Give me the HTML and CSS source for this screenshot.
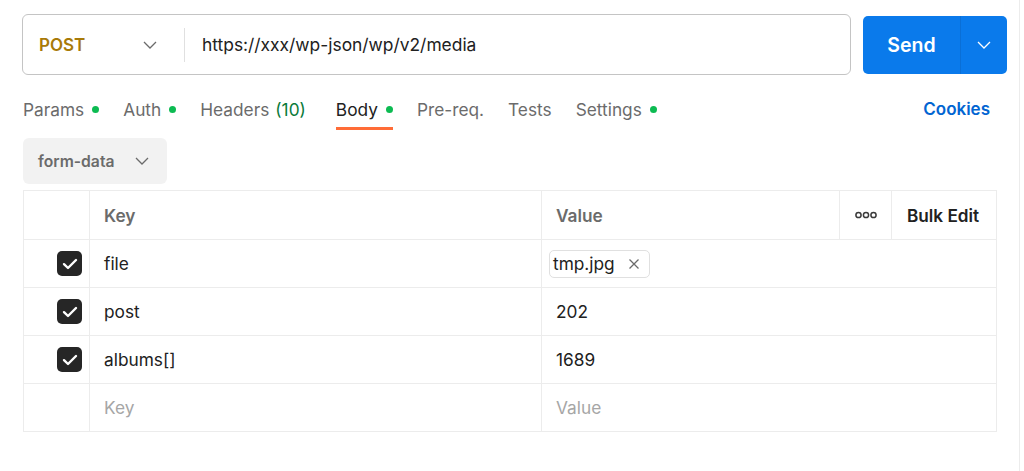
FILE: index.html
```html
<!DOCTYPE html>
<html>
<head>
<meta charset="utf-8">
<link rel="stylesheet" href="styles.css">
</head>
<body>
<div class="page">
  <div class="topbar">
    <div class="urlbar">
      <div class="method">
        <span class="method-name">POST</span>
        <svg class="chev" width="14" height="8" viewBox="0 0 14 8"><path d="M1 1l6 6 6-6" fill="none" stroke="#6b6b6b" stroke-width="1.3"/></svg>
      </div>
      <div class="url">https://xxx/wp-json/wp/v2/media</div>
    </div>
    <div class="send">
      <span class="send-label">Send</span>
      <span class="send-arrow"><svg width="14" height="8" viewBox="0 0 14 8"><path d="M1 1l6 6 6-6" fill="none" stroke="#fff" stroke-width="1.3"/></svg></span>
    </div>
  </div>

  <div class="tabs">
    <div class="tab">Params<span class="dot"></span></div>
    <div class="tab">Auth<span class="dot"></span></div>
    <div class="tab headers">Headers <span class="count">(10)</span></div>
    <div class="tab active">Body<span class="dot"></span></div>
    <div class="tab">Pre-req.</div>
    <div class="tab">Tests</div>
    <div class="tab">Settings<span class="dot"></span></div>
    <div class="spacer"></div>
    <div class="cookies">Cookies</div>
  </div>

  <div class="bodytype">
    <span>form-data</span>
    <svg class="chev" width="14" height="8" viewBox="0 0 14 8"><path d="M1 1l6 6 6-6" fill="none" stroke="#6b6b6b" stroke-width="1.3"/></svg>
  </div>

  <table class="kv">
    <colgroup>
      <col class="c-check"><col class="c-key"><col class="c-val"><col class="c-dots"><col class="c-bulk">
    </colgroup>
    <tr class="head">
      <td></td>
      <td class="th">Key</td>
      <td class="th">Value</td>
      <td class="dots-cell"><svg width="22" height="8" viewBox="0 0 22 8"><circle cx="3.5" cy="4" r="2.6" fill="none" stroke="#3a3a3a" stroke-width="1.5"/><circle cx="11" cy="4" r="2.6" fill="none" stroke="#3a3a3a" stroke-width="1.5"/><circle cx="18.5" cy="4" r="2.6" fill="none" stroke="#3a3a3a" stroke-width="1.5"/></svg></td>
      <td class="bulk">Bulk Edit</td>
    </tr>
    <tr>
      <td class="check"><span class="cb"><svg width="16" height="12" viewBox="0 0 16 12"><path d="M2 6.2l4 3.8 8-8" fill="none" stroke="#fff" stroke-width="2.4" stroke-linecap="round" stroke-linejoin="round"/></svg></span></td>
      <td>file</td>
      <td colspan="3" class="file-cell"><span class="chip">tmp.jpg<svg class="x" width="12" height="12" viewBox="0 0 12 12"><path d="M1.5 1.5l9 9M10.5 1.5l-9 9" stroke="#6b6b6b" stroke-width="1.3"/></svg></span></td>
    </tr>
    <tr>
      <td class="check"><span class="cb"><svg width="16" height="12" viewBox="0 0 16 12"><path d="M2 6.2l4 3.8 8-8" fill="none" stroke="#fff" stroke-width="2.4" stroke-linecap="round" stroke-linejoin="round"/></svg></span></td>
      <td>post</td>
      <td colspan="3">202</td>
    </tr>
    <tr>
      <td class="check"><span class="cb"><svg width="16" height="12" viewBox="0 0 16 12"><path d="M2 6.2l4 3.8 8-8" fill="none" stroke="#fff" stroke-width="2.4" stroke-linecap="round" stroke-linejoin="round"/></svg></span></td>
      <td>albums[]</td>
      <td colspan="3">1689</td>
    </tr>
    <tr>
      <td></td>
      <td class="ph">Key</td>
      <td colspan="3" class="ph">Value</td>
    </tr>
  </table>
</div>
</body>
</html>
```

FILE: styles.css
```css
* { box-sizing: border-box; }
html, body { margin: 0; padding: 0; background: #fff; }
body {
  font-family: Inter, "Noto Sans", "Liberation Sans", sans-serif;
  color: #212121;
  font-size: 17.3px;
}
.page {
  width: 1020px;
  height: 471px;
  border-right: 1px solid #ececec;
  padding: 14px 0 0 23px;
}
.topbar {
  display: flex;
  align-items: center;
  gap: 12px;
  width: 985px;
}
.urlbar {
  flex: 0 0 829px;
  height: 61px;
  margin-left: -1px;
  border: 1px solid #c4c4c4;
  border-radius: 6px;
  display: flex;
  align-items: center;
}
.method {
  width: 162px;
  height: 34px;
  display: flex;
  align-items: center;
  padding-left: 16px;
  border-right: 1px solid #e0e0e0;
}
.method-name {
  color: #a87a08;
  font-weight: 600;
  font-size: 17px;
  width: 104px;
}
.url {
  padding-left: 17px;
  font-size: 17.4px;
  color: #212121;
}
.send {
  flex: 0 0 144px;
  height: 58px;
  background: #0a7aeb;
  border-radius: 5px;
  display: flex;
  align-items: center;
  color: #fff;
}
.send-label {
  width: 97px;
  text-align: center;
  font-weight: 600;
  font-size: 19.5px;
}
.send-arrow {
  flex: 1;
  height: 100%;
  border-left: 1px solid #0a6fd6;
  display: flex;
  align-items: center;
  justify-content: center;
}
.tabs {
  display: flex;
  align-items: center;
  height: 44px;
  margin-top: 12px;
  width: 967px;
  font-size: 17.3px;
  color: #6b6b6b;
}
.tab {
  position: relative;
  display: flex;
  align-items: center;
  height: 100%;
  margin-right: 24px;
}
.tab.headers { margin-right: 30px; }
.tab .dot {
  width: 7px;
  height: 7px;
  border-radius: 50%;
  background: #0cbb52;
  margin-left: 8px;
}
.count { color: #0a7a3a; margin-left: 6px; }
.tab.active { color: #212121; }
.tab.active::after {
  content: "";
  position: absolute;
  left: 0; right: 0;
  bottom: 1px;
  height: 3px;
  background: #ff6c37;
}
.spacer { flex: 1; }
.cookies {
  color: #0265d2;
  font-weight: 600;
  font-size: 17px;
}
.bodytype {
  margin-top: 7px;
  width: 144px;
  height: 46px;
  background: #f2f2f2;
  border-radius: 6px;
  display: flex;
  align-items: center;
  padding-left: 15px;
  color: #6b6b6b;
  font-weight: 600;
  font-size: 15.7px;
}
.bodytype span { width: 97px; }
.kv {
  margin-top: 6px;
  border-collapse: collapse;
  width: 973px;
  table-layout: fixed;
}
.c-check { width: 66px; }
.c-key { width: 452px; }
.c-val { width: 298px; }
.c-dots { width: 52px; }
.c-bulk { width: 105px; }
.kv td {
  border: 1.5px solid #ececec;
  height: 48px;
  padding: 0 14px;
  font-size: 17.3px;
  color: #212121;
  white-space: nowrap;
}
.kv tr.head td { height: 49px; }
.kv td.th { color: #6b6b6b; font-weight: 600; }
.kv td.dots-cell { padding: 0; text-align: center; }
.kv td.dots-cell svg { display: block; margin: 0 auto; }
.kv td.bulk { font-weight: 600; color: #212121; padding: 0 15px; font-size: 17.2px; }
.kv td.check { padding: 0 7px 0 0; text-align: right; }
.cb {
  display: inline-flex;
  width: 25px;
  height: 25px;
  border-radius: 5px;
  background: #262626;
  align-items: center;
  justify-content: center;
  vertical-align: middle;
}
.kv td.file-cell { padding-left: 7px; }
.chip {
  display: inline-flex;
  align-items: center;
  height: 28px;
  padding: 0 9px 0 3px;
  border: 1px solid #e0e0e0;
  border-radius: 5px;
}
.chip .x { margin-left: 13px; }
.kv td.ph { color: #a6a6a6; }
```
